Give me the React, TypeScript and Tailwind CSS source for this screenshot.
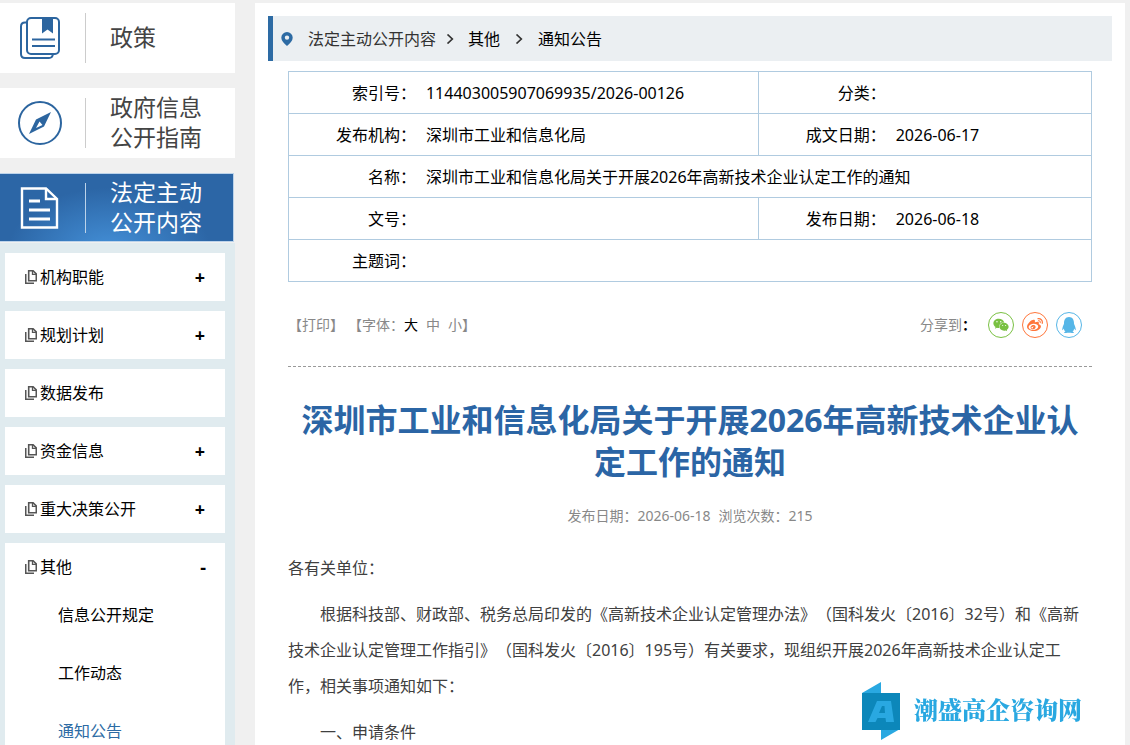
import { useState } from "react";
import { FaQq, FaWeibo, FaWeixin } from "react-icons/fa";

function BookIcon() {
  return (
    <svg className="h-[42px] w-10" viewBox="0 0 40 42" fill="none" stroke="#2c659f" strokeWidth="2" aria-hidden="true">
      <path d="M7 5.500H5Q1 5.500 1 9.500V37q0 4 4 4H29q3.500 0 4-4" />
      <rect x="7" y="1" width="32" height="36" rx="4" />
      <path d="M12 22.500h23M12 29h23" />
      <path d="M22 1h11v15.500l-5.500-4-5.500 4z" fill="#2c659f" stroke="none" />
    </svg>
  );
}

function CompassIcon() {
  return (
    <svg className="size-11" viewBox="0 0 44 44" fill="none" aria-hidden="true">
      <circle cx="22" cy="22" r="21" stroke="#2c659f" strokeWidth="2" />
      <path fillRule="evenodd" fill="#2c659f" d="M33 11L26 25.500 11 33 18 18.500zM21.500 20.500l-3.500 6.500 6.500-3z" />
    </svg>
  );
}

function DocumentIcon() {
  return (
    <svg className="h-[42px] w-10" viewBox="0 0 40 42" fill="none" stroke="#fff" aria-hidden="true">
      <path d="M2 1.500H26L37 12V40.500H2z" strokeWidth="2.400" />
      <path d="M26 1.500V12H37" strokeWidth="2.400" />
      <path d="M9 14h11M9 23h21M9 32h21" strokeWidth="3" />
    </svg>
  );
}

function PagesIcon() {
  return (
    <svg className="h-3.5 w-3" viewBox="0 0 12 14" fill="none" stroke="#555" aria-hidden="true">
      <path d="M.7 4v9.300H9" strokeWidth="1.600" />
      <path d="M3.700.7H8L11.300 4v6.800H3.700z" strokeWidth="1.600" />
      <path d="M7.500.7V4.300H11.300" strokeWidth="1.300" />
    </svg>
  );
}

function PinIcon() {
  return (
    <svg className="h-3.5 w-3" viewBox="0 0 12 14" aria-hidden="true">
      <path
        fill="#2d6ba4"
        fillRule="evenodd"
        d="M6 0a5.700 5.700 0 0 1 5.700 5.700C11.700 8.700 9 11 6 14 3 11 .3 8.700.3 5.700A5.700 5.700 0 0 1 6 0zm0 3.400a2.200 2.200 0 1 0 0 4.400 2.200 2.200 0 0 0 0-4.400z"
      />
    </svg>
  );
}

function Arrow() {
  return (
    <svg className="h-2.5 w-2" viewBox="0 0 8 10" fill="none" stroke="#333" strokeWidth="1.700" aria-hidden="true">
      <path d="M1.500.5L6.300 5 1.500 9.500" />
    </svg>
  );
}

const sections = [
  { name: "机构职能", mark: "+" },
  { name: "规划计划", mark: "+" },
  { name: "数据发布", mark: "" },
  { name: "资金信息", mark: "+" },
  { name: "重大决策公开", mark: "+" },
];
const children = ["信息公开规定", "工作动态", "通知公告"];

const shareLinks = [
  { name: "微信", Icon: FaWeixin, style: "border-[#7ac143] text-[#7ac143]" },
  { name: "微博", Icon: FaWeibo, style: "border-[#ff763b] text-[#ff763b]" },
  { name: "QQ", Icon: FaQq, style: "border-[#56b6e7] text-[#56b6e7]" },
];

function Sidebar() {
  const [open, setOpen] = useState(true);
  const card = "flex h-[70px] items-center bg-white text-[23px] leading-[30px] text-[#444]";
  const iconBox = "flex w-[85px] shrink-0 items-center pl-[18px]";
  const label = "flex h-[50px] items-center border-l pb-0.5 pl-6";
  return (
    <aside className="flex w-[235px] shrink-0 flex-col">
      <div className="flex flex-col gap-[15px]">
        <a href="#policy" className={card}>
          <span className={iconBox}><span className="pl-0.5"><BookIcon /></span></span>
          <span className={`${label} border-[#ccc]`}>政策</span>
        </a>
        <a href="#guide" className={card}>
          <span className={iconBox}><CompassIcon /></span>
          <span className={`${label} border-[#ccc]`}>政府信息<br />公开指南</span>
        </a>
        <a
          href="#disclosure"
          className="mr-px flex h-[69px] items-center border-y border-r border-[#bcd3ea] bg-[radial-gradient(ellipse_at_47%_115%,#4490d8_0%,#2c66a6_58%)] text-[23px] leading-[30px] text-white"
        >
          <span className={iconBox}><span className="pl-0.5"><DocumentIcon /></span></span>
          <span className={`${label} border-[#bcd3ea]`}>法定主动<br />公开内容</span>
        </a>
      </div>
      <nav className="mt-px flex flex-1 flex-col gap-2.5 bg-[#e0ebef] py-2.5 pr-2.5 pl-[5px]">
        {sections.map((s) => (
          <button key={s.name} type="button" className="flex h-12 cursor-pointer items-center gap-[3px] bg-white pr-5 pl-5 text-left text-base text-black">
            <PagesIcon />
            <span className="flex-1">{s.name}</span>
            <span className="text-lg font-bold">{s.mark}</span>
          </button>
        ))}
        <div className="bg-white">
          <button
            type="button"
            aria-expanded={open}
            onClick={() => setOpen(!open)}
            className="flex h-12 w-full cursor-pointer items-center gap-[3px] pr-[19px] pl-5 text-left text-base text-black"
          >
            <PagesIcon />
            <span className="flex-1">其他</span>
            <span className="text-lg font-bold">{open ? "-" : "+"}</span>
          </button>
          {open && (
            <ul className="flex flex-col gap-2.5">
              {children.map((c) => (
                <li key={c}>
                  <a
                    href="#list"
                    className={`block pl-[53px] text-base leading-[48px] ${c === "通知公告" ? "text-[#2d6ba4]" : "text-black"}`}
                  >
                    {c}
                  </a>
                </li>
              ))}
            </ul>
          )}
        </div>
      </nav>
    </aside>
  );
}

function InfoTable() {
  const row = "h-[42px] border border-[#b0cbe0]";
  const th = "py-0 pr-px pl-0 text-right font-normal";
  const mid = "border-l border-[#b0cbe0] py-0 pr-px pl-0 text-right font-normal";
  const td = "py-0 pr-0 pl-[9px]";
  return (
    <table className="w-full table-fixed border-collapse text-base text-black">
      <colgroup>
        <col className="w-[16%]" />
        <col className="w-[42.5%]" />
        <col className="w-[16%]" />
        <col />
      </colgroup>
      <tbody>
        <tr className={row}>
          <th className={th}>索引号：</th>
          <td className={td}>114403005907069935/2026-00126</td>
          <th className={mid}>分类：</th>
          <td className={td} />
        </tr>
        <tr className={row}>
          <th className={th}>发布机构：</th>
          <td className={td}>深圳市工业和信息化局</td>
          <th className={mid}>成文日期：</th>
          <td className={td}>2026-06-17</td>
        </tr>
        <tr className={row}>
          <th className={th}>名称：</th>
          <td className={td} colSpan={3}>深圳市工业和信息化局关于开展2026年高新技术企业认定工作的通知</td>
        </tr>
        <tr className={row}>
          <th className={th}>文号：</th>
          <td className={td} />
          <th className={mid}>发布日期：</th>
          <td className={td}>2026-06-18</td>
        </tr>
        <tr className={row}>
          <th className={th}>主题词：</th>
          <td className={td} colSpan={3} />
        </tr>
      </tbody>
    </table>
  );
}

export default function App() {
  const [size, setSize] = useState("大");
  return (
    <div className="flex min-h-screen gap-5 bg-[#f0f0f0] pt-[3px] pr-[5px] font-['Noto_Sans','Noto_Sans_CJK_SC',sans-serif] [text-spacing-trim:space-all]" lang="zh-CN">
      <Sidebar />
      <main className="min-w-0 flex-1 bg-white px-[13px] pt-[13px]">
        <div className="flex h-[45px] items-center border-l-[5px] border-[#2d6ba4] bg-[#ebeff2] pl-2 text-base text-black">
          <PinIcon />
          <a href="#disclosure" className="ml-[15px] text-[#333]">法定主动公开内容</a>
          <span className="ml-2.5"><Arrow /></span>
          <a href="#other" className="ml-3.5">其他</a>
          <span className="ml-[15px]"><Arrow /></span>
          <a href="#notice" className="ml-[15px]">通知公告</a>
        </div>
        <div className="px-5 pt-2.5">
          <InfoTable />
          <div className="flex h-[85px] items-center justify-between border-b border-dashed border-[#999] pt-0.5 text-sm text-[#888]">
            <div className="flex items-center">
              <button type="button" className="cursor-pointer">【打印】</button>
              <span className="ml-1">【字体：</span>
              {["大", "中", "小"].map((s) => (
                <button
                  key={s}
                  type="button"
                  onClick={() => setSize(s)}
                  className={`cursor-pointer ${s === "小" ? "" : "mr-2"} ${size === s ? "text-black" : ""}`}
                >
                  {s}
                </button>
              ))}
              <span>】</span>
            </div>
            <div className="flex items-center gap-2 pr-2.5">
              <span className="mr-1">分享到<span className="font-bold text-black">：</span></span>
              {shareLinks.map(({ name, Icon, style }) => (
                <a key={name} href="#share" aria-label={name} className={`flex size-[26px] items-center justify-center rounded-full border ${style}`}>
                  <Icon className="size-4" />
                </a>
              ))}
            </div>
          </div>
          <h1 className="mt-8 text-center text-[32px] leading-[42px] font-bold text-[#2b65a5]">
            深圳市工业和信息化局关于开展2026年高新技术企业认定工作的通知
          </h1>
          <p className="mt-[21px] text-center text-sm leading-6 text-[#888]">
            发布日期：2026-06-18<span className="ml-2">浏览次数：215</span>
          </p>
          <article className="mt-[22px] flex flex-col gap-2.5 text-base leading-9 text-[#404040]">
            <p>各有关单位：</p>
            <p className="indent-8">
              根据科技部、财政部、税务总局印发的《高新技术企业认定管理办法》（国科发火〔2016〕32号）和《高新技术企业认定管理工作指引》（国科发火〔2016〕195号）有关要求，现组织开展2026年高新技术企业认定工作，相关事项通知如下：
            </p>
            <p className="indent-8">一、申请条件</p>
          </article>
        </div>
      </main>
      <div className="fixed right-12 bottom-1 flex items-center gap-3.5">
        <svg className="h-[60px] w-[38px]" viewBox="0 0 38 60" aria-hidden="true">
          <path d="M0 12L19 1v20H0zM19 40h19v8L19 59z" fill="#29a8e1" />
          <rect y="12" width="38" height="37" fill="#0c87ba" />
          <path fillRule="evenodd" fill="#29a8e1" d="M15 20h14l3 21h-8l-.5-4h-8l-2 4H6zm5 5l-3 7h6l-.5-7z" />
        </svg>
        <span className="font-['Liberation_Serif','Noto_Serif_CJK_SC','Noto_Sans_CJK_SC',serif] text-2xl font-black text-[#29a8e1]">潮盛高企咨询网</span>
      </div>
    </div>
  );
}
